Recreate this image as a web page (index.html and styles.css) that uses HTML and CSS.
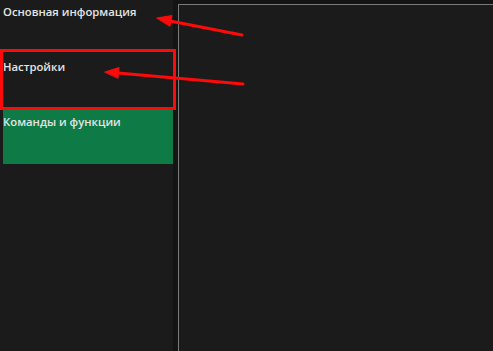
FILE: index.html
```html
<!DOCTYPE html>
<html lang="ru">
<head>
<meta charset="utf-8">
<link rel="stylesheet" href="styles.css">
</head>
<body>
<div class="app">
  <nav class="sidebar">
    <div class="item">Основная информация</div>
    <div class="item">Настройки</div>
    <div class="item active">Команды и функции</div>
  </nav>
  <main class="panel"></main>
</div>
<div class="highlight"></div>
<svg class="arrows" width="493" height="351" viewBox="0 0 493 351">
  <g stroke="#ff0a0a" stroke-width="3" stroke-linecap="round" fill="#ff0a0a">
    <line x1="242" y1="35" x2="170" y2="21"/>
    <polygon points="157,18 172,15.5 170,26" stroke-width="1"/>
    <line x1="243" y1="84" x2="118" y2="73"/>
    <polygon points="105,72 119,67.5 118,78" stroke-width="1"/>
  </g>
</svg>
</body>
</html>
```
FILE: styles.css
```css
html, body {
  margin: 0;
  padding: 0;
  width: 493px;
  height: 351px;
  overflow: hidden;
  background: #141414;
  font-family: "Open Sans", "DejaVu Sans", sans-serif;
}
.app {
  display: flex;
  height: 351px;
  gap: 5px;
}
.sidebar {
  width: 170px;
  padding-left: 3px;
  background: #1b1b1b;
  display: flex;
  flex-direction: column;
  gap: 1px;
}
.item {
  height: 54px;
  color: #e4e4e4;
  font-size: 11.3px;
  font-weight: 600;
  line-height: 16px;
  padding-top: 4px;
  box-sizing: border-box;
  white-space: nowrap;
}
.item.active {
  background: #0e7a45;
}
.panel {
  flex: 1;
  margin-top: 4px;
  background: #1b1b1b;
  border-top: 1px solid #7a7a7a;
  border-left: 1px solid #7a7a7a;
}
.highlight {
  position: absolute;
  left: 0;
  top: 49px;
  width: 176px;
  height: 61px;
  box-sizing: border-box;
  border: 3px solid #ff0a0a;
}
.arrows {
  position: absolute;
  left: 0;
  top: 0;
}
```
